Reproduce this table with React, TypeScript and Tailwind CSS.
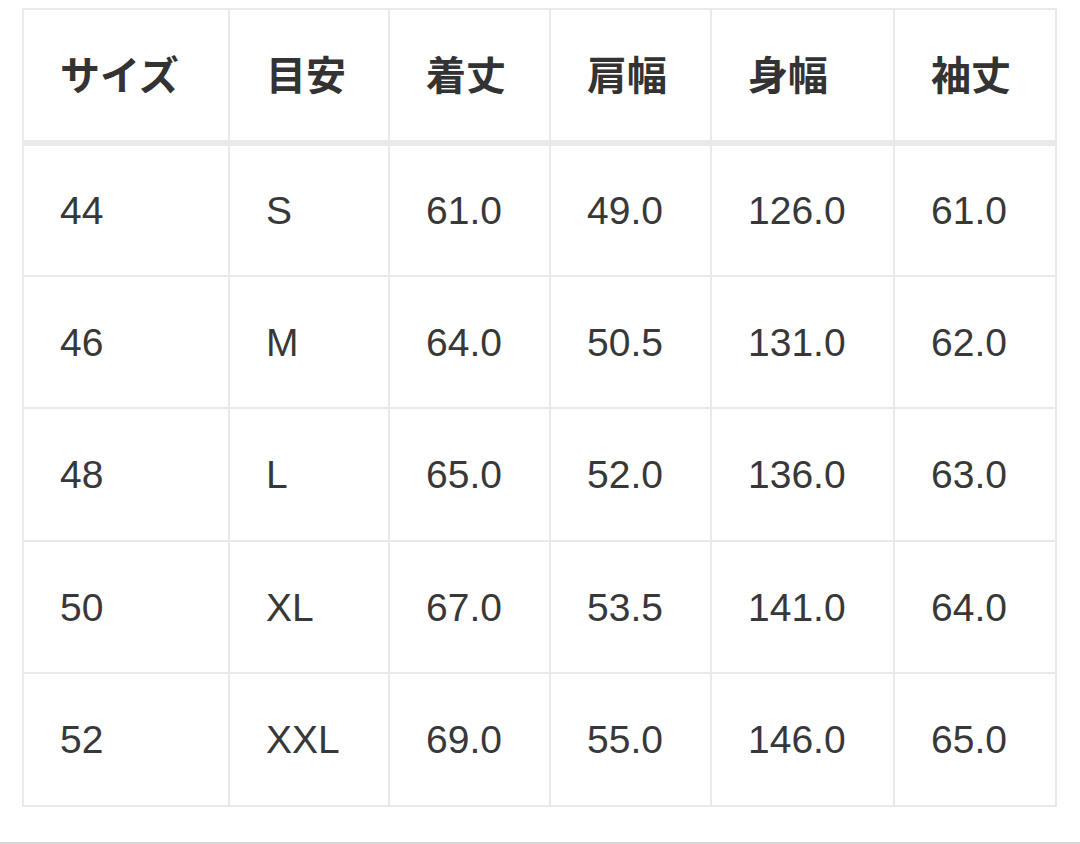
const headers = ['サイズ', '目安', '着丈', '肩幅', '身幅', '袖丈']

const rows = [
  ['44', 'S', '61.0', '49.0', '126.0', '61.0'],
  ['46', 'M', '64.0', '50.5', '131.0', '62.0'],
  ['48', 'L', '65.0', '52.0', '136.0', '63.0'],
  ['50', 'XL', '67.0', '53.5', '141.0', '64.0'],
  ['52', 'XXL', '69.0', '55.0', '146.0', '65.0'],
]

export default function App() {
  return (
    <div className="w-[1080px] h-[844px] bg-white flex flex-col overflow-hidden">
      <div className="pt-[8px] pl-[22px]">
        <div className="w-[1035px] grid grid-cols-[204px_158px_159px_159px_181px_160px] grid-rows-[134px_129px_130px_131px_130px_131px] gap-[2px] p-[2px] bg-[#e9e9e9]">
          {headers.map(h => (
            <div
              key={h}
              className="bg-white border-b-4 border-[#e9e9e9] flex items-center pl-[36px] pb-[5px] text-[40px] font-bold text-[#333333] [font-family:'Noto_Sans_CJK_JP',sans-serif] leading-none"
            >
              {h}
            </div>
          ))}
          {rows.map((r, i) =>
            r.map((c, j) => (
              <div
                key={`${i}-${j}`}
                className="bg-white flex items-center pl-[36px] text-[39px] text-[#383838] [font-family:'Liberation_Sans',Arial,sans-serif] leading-none"
              >
                {c}
              </div>
            ))
          )}
        </div>
      </div>
      <div className="mt-auto h-[2px] bg-[#d4d4d4]" />
    </div>
  )
}
